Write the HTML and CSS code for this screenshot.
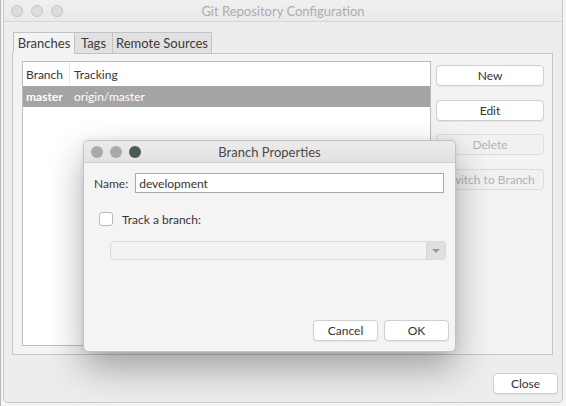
FILE: index.html
```html
<!DOCTYPE html>
<html>
<head>
<meta charset="utf-8">
<link rel="stylesheet" href="styles.css">
</head>
<body>
<div class="desk">
  <div class="window">
    <div class="titlebar">
      <div class="lights"><span></span><span></span><span></span></div>
      <div class="title">Git Repository Configuration</div>
    </div>
    <div class="wbody">
      <div class="tabs">
        <div class="tab active t-branches">Branches</div>
        <div class="tab t-tags">Tags</div>
        <div class="tab t-remote">Remote Sources</div>
      </div>
      <div class="pane">
        <div class="table">
          <div class="trow thead">
            <div class="c1">Branch</div>
            <div class="c2">Tracking</div>
          </div>
          <div class="trow sel">
            <div class="c1 bold">master</div>
            <div class="c2">origin/master</div>
          </div>
        </div>
        <div class="side">
          <div class="btn">New</div>
          <div class="btn">Edit</div>
          <div class="btn disabled">Delete</div>
          <div class="btn disabled">Switch to Branch</div>
        </div>
      </div>
      <div class="footer">
        <div class="btn close">Close</div>
      </div>
    </div>
  </div>

  <div class="dialog">
    <div class="dtitlebar">
      <div class="dlights"><span></span><span></span><span class="dark"></span></div>
      <div class="dtitle">Branch Properties</div>
    </div>
    <div class="dbody">
      <div class="namerow">
        <label class="lbl">Name:</label>
        <div class="input">development</div>
      </div>
      <div class="checkrow">
        <div class="checkbox"></div>
        <span>Track a branch:</span>
      </div>
      <div class="combo"><div class="combo-arrow"><span></span></div></div>
      <div class="dfooter">
        <div class="btn dbtn">Cancel</div>
        <div class="btn dbtn">OK</div>
      </div>
    </div>
  </div>
</div>
</body>
</html>
```

FILE: styles.css
```css
* { box-sizing: border-box; }
html, body {
  margin: 0;
  padding: 0;
}
body {
  width: 566px;
  height: 406px;
  background: #f4f4f4;
  font-family: "Lato", "Open Sans", sans-serif;
  font-size: 12px;
  color: #363636;
  overflow: hidden;
}
.desk {
  position: relative;
  width: 566px;
  height: 406px;
  padding-left: 3px;
  border-left: 1px solid #b8b8b8;
}
.window {
  margin-left: -1px;
  width: 560px;
  height: 403px;
  border: 1px solid #c9c9c9;
  border-top: none;
  border-radius: 0 0 5px 5px;
  background: #ededed;
  display: flex;
  flex-direction: column;
}
.titlebar {
  height: 22px;
  flex: none;
  display: flex;
  align-items: center;
  position: relative;
  background: linear-gradient(#f0f0f0, #e9e9e9);
  border-bottom: 1px solid #d6d6d6;
  border-radius: 0 5px 0 0;
}
.lights {
  display: flex;
  gap: 8px;
  padding-left: 7px;
}
.lights span {
  width: 12px;
  height: 12px;
  border-radius: 50%;
  background: #dcdcdc;
  border: 1px solid #c6c6c6;
}
.title {
  position: absolute;
  left: 0;
  right: 0;
  text-align: center;
  font-size: 13px;
  color: #acacac;
}
.wbody {
  flex: 1;
  display: flex;
  flex-direction: column;
  padding: 10px 9px 0 8px;
}
.tabs {
  display: flex;
  height: 22px;
  margin-left: 1px;
  position: relative;
  z-index: 1;
  margin-bottom: -1px;
}
.tab {
  display: flex;
  align-items: center;
  justify-content: center;
  background: #e1e1e1;
  border: 1px solid #c2c2c2;
  border-left: none;
  font-size: 13px;
  color: #3a3a3a;
}
.tab:first-child {
  border-left: 1px solid #c2c2c2;
}
.t-branches { width: 62px; }
.t-tags { width: 38px; }
.t-remote { width: 99px; }
.tab.active {
  background: #f3f3f3;
  border-bottom-color: #f3f3f3;
}
.pane {
  height: 302px;
  border: 1px solid #c6c6c6;
  background: #f3f3f3;
  display: flex;
  gap: 5px;
  padding: 7px 8px 8px 9px;
}
.table {
  width: 409px;
  background: #fff;
  border: 1px solid #bdbdbd;
}
.trow {
  display: flex;
  align-items: center;
}
.thead {
  height: 24px;
}
.thead .c1 {
  border-right: 1px solid #e6e6e6;
}
.c1 {
  width: 47px;
  padding-left: 3px;
  height: 100%;
  display: flex;
  align-items: center;
}
.c2 {
  padding-left: 4px;
}
.sel {
  height: 21px;
  background: #a4a4a4;
  color: #fff;
}
.bold { font-weight: bold; }
.side {
  width: 108px;
  display: flex;
  flex-direction: column;
  gap: 13.5px;
  padding-top: 4px;
}
.btn {
  height: 21px;
  display: flex;
  align-items: center;
  justify-content: center;
  background: #fff;
  border: 1px solid #cfcfcf;
  border-radius: 4px;
  box-shadow: 0 1px 1px rgba(0,0,0,0.06);
  color: #333;
  font-size: 12px;
  white-space: nowrap;
  overflow: hidden;
}
.btn.disabled {
  background: #f1f1f1;
  border-color: #dcdcdc;
  color: #b3b3b3;
  box-shadow: none;
}
.footer {
  display: flex;
  justify-content: flex-end;
  margin-top: 18px;
  margin-right: -5px;
}
.close {
  width: 65px;
}

/* Dialog */
.dialog {
  position: absolute;
  left: 82px;
  top: 140px;
  width: 373px;
  height: 212px;
  background: #f4f4f4;
  border: 1px solid #c2c2c2;
  border-radius: 5px;
  box-shadow: 0 16px 36px rgba(0,0,0,0.32), 0 0 6px rgba(0,0,0,0.08);
  display: flex;
  flex-direction: column;
}
.dtitlebar {
  height: 22px;
  flex: none;
  position: relative;
  display: flex;
  align-items: center;
  background: linear-gradient(#ebebeb, #e2e2e2);
  border-bottom: 1px solid #d0d0d0;
  border-radius: 5px 5px 0 0;
}
.dlights {
  display: flex;
  gap: 7px;
  padding-left: 7px;
}
.dlights span {
  width: 12px;
  height: 12px;
  border-radius: 50%;
  background: #a9a9a9;
}
.dlights span.dark {
  background: #4d5c52;
}
.dtitle {
  position: absolute;
  left: 0;
  right: 0;
  text-align: center;
  font-size: 13px;
  color: #4a4a4a;
}
.dbody {
  flex: 1;
  display: flex;
  flex-direction: column;
  padding: 10px 11px 10px 10px;
}
.namerow {
  display: flex;
  align-items: center;
  gap: 7px;
  height: 20px;
}
.lbl {
  color: #3a3a3a;
}
.input {
  flex: 1;
  height: 20px;
  background: #fff;
  border: 1px solid #a9a9a9;
  padding-left: 3px;
  display: flex;
  align-items: center;
  color: #333;
}
.checkrow {
  display: flex;
  align-items: center;
  gap: 9px;
  margin-top: 18px;
  margin-left: 5px;
  height: 16px;
}
.checkbox {
  width: 14px;
  height: 14px;
  border: 1px solid #b9b9b9;
  border-radius: 3px;
  background: #fff;
}
.combo {
  margin-top: 14px;
  margin-left: 16px;
  margin-right: -2px;
  height: 19px;
  background: #f3f3f3;
  border: 1px solid #dadada;
  border-radius: 3px;
  display: flex;
  justify-content: flex-end;
}
.combo-arrow {
  width: 19px;
  height: 100%;
  background: #e0e0e0;
  border-left: 1px solid #d6d6d6;
  display: flex;
  align-items: center;
  justify-content: center;
}
.combo-arrow span {
  width: 0;
  height: 0;
  border-left: 4px solid transparent;
  border-right: 4px solid transparent;
  border-top: 4px solid #9a9a9a;
}
.dfooter {
  margin-top: auto;
  display: flex;
  justify-content: flex-end;
  gap: 6px;
  margin-right: -5px;
}
.dbtn {
  width: 65px;
}
```
